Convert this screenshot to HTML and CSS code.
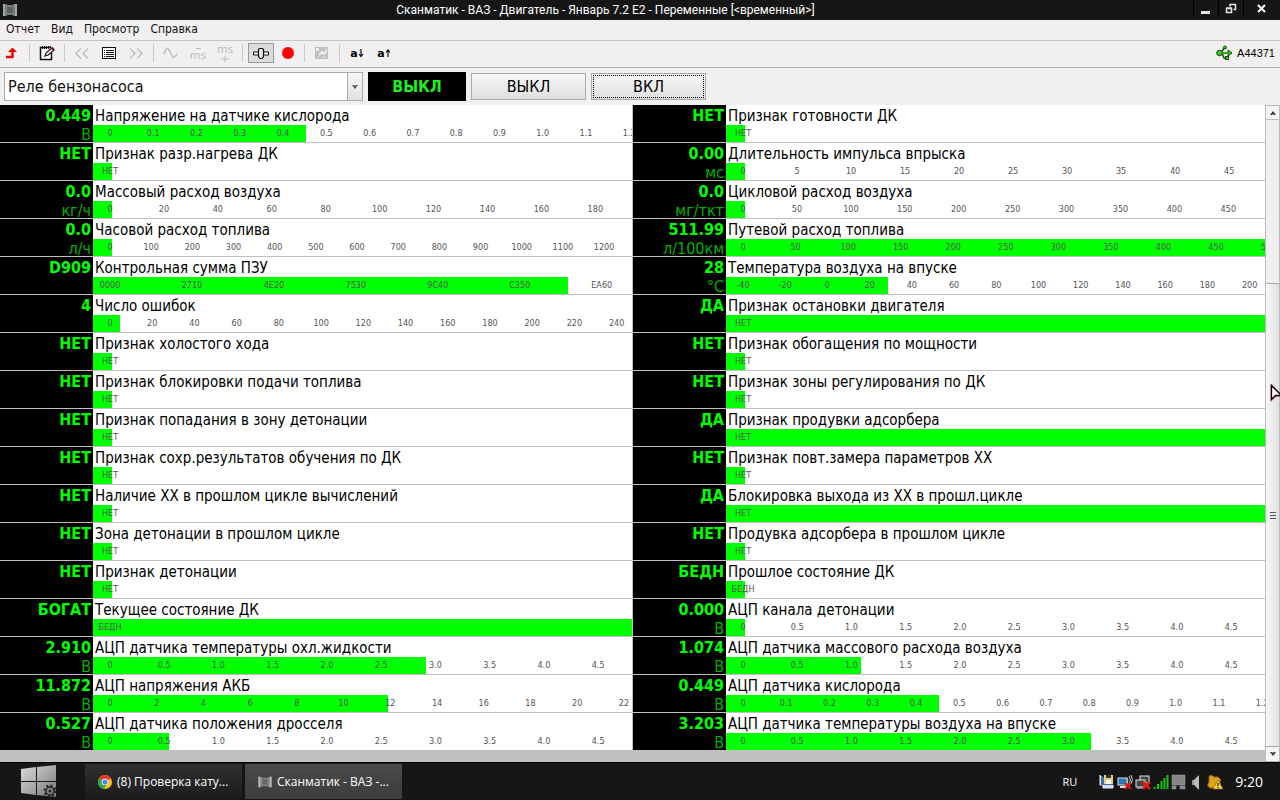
FILE: index.html
```html
<!DOCTYPE html>
<html lang="ru">
<head>
    <meta charset="UTF-8">
    <meta name="viewport" content="width=device-width, initial-scale=1.0">
    <title>Сканматик - ВАЗ - Двигатель - Январь 7.2 E2</title>
    <link rel="stylesheet" href="styles.css">
</head>
<body>
    <!-- Title bar -->
    <header class="titlebar">
        <svg class="app-icon" width="16" height="14" viewBox="0 0 16 14">
            <path d="M1 1h4v1h6v-1h4v12h-4v-1h-6v1h-4z" fill="#777c78"/>
            <path d="M2 1v12M14 1v12" stroke="#a5a5a5" stroke-width="2"/>
            <rect x="5" y="4" width="6" height="6" fill="#5d635f"/>
        </svg>
        <h1>Сканматик - ВАЗ - Двигатель - Январь 7.2 E2 - Переменные [&lt;временный&gt;]</h1>
        <div class="window-buttons">
            <button type="button" aria-label="Свернуть">
                <svg width="12" height="12" viewBox="0 0 12 12"><path d="M1 8h9v3h-9z" fill="#e6e6e6"/></svg>
            </button>
            <button type="button" aria-label="Восстановить">
                <svg width="12" height="12" viewBox="0 0 12 12"><path d="M5 3.500v-2h5.500v5h-2M1.500 5.500h5v4h-5zM1 5h6" fill="none" stroke="#e6e6e6" stroke-width="1.500"/></svg>
            </button>
            <button type="button" aria-label="Закрыть">
                <svg width="12" height="12" viewBox="0 0 12 12"><path d="M2 2l7 7M9 2l-7 7" stroke="#f0f0f0" stroke-width="2.200"/></svg>
            </button>
        </div>
    </header>

    <!-- Menu -->
    <nav class="menu">
        <a href="#">Отчет</a>
        <a href="#">Вид</a>
        <a href="#">Просмотр</a>
        <a href="#">Справка</a>
    </nav>

    <!-- Toolbar -->
    <div class="toolbar">
        <button type="button" class="tool" aria-label="Выход">
            <svg width="16" height="16" viewBox="0 0 16 16"><path d="M2 12h6.500v-7" fill="none" stroke="#e80000" stroke-width="2.400"/><path d="M4 7l4-4h1l4 4z" fill="#e80000"/></svg>
        </button>
        <span class="separator"></span>
        <button type="button" class="tool" aria-label="Заметки">
            <svg width="16" height="16" viewBox="0 0 16 16"><path d="M12 2.500h-10.500v12h11v-7" fill="#fff" stroke="#111" stroke-width="1.500"/><path d="M3.500 1v3M5.500 1v3M7.500 1v3M9.500 1v3M11.500 1v2" stroke="#111"/><path d="M6 11l1-3 6-5 2 2-6 5z" fill="#fff" stroke="#111" stroke-width="1.200"/><path d="M12.500 2.500l2.500 2.500" stroke="#801010" stroke-width="2"/></svg>
        </button>
        <span class="separator"></span>
        <button type="button" class="tool" aria-label="Назад" disabled>
            <svg width="16" height="16" viewBox="0 0 16 16"><path d="M7 3.500l-5 5 5 5M14 3.500l-5 5 5 5" fill="none" stroke="#c0c0c0" stroke-width="1.500"/></svg>
        </button>
        <button type="button" class="tool" aria-label="Список">
            <svg width="16" height="16" viewBox="0 0 16 16" shape-rendering="crispEdges"><path d="M1.500 2.500h13v11h-13z" fill="#fff" stroke="#111"/><path d="M3 5.500h1M3 7.500h1M3 9.500h1M3 11.500h1M5 5.500h8M5 7.500h8M5 9.500h8M5 11.500h8" stroke="#111"/></svg>
        </button>
        <button type="button" class="tool" aria-label="Вперед" disabled>
            <svg width="16" height="16" viewBox="0 0 16 16"><path d="M2 3.500l5 5-5 5M9 3.500l5 5-5 5" fill="none" stroke="#c0c0c0" stroke-width="1.500"/></svg>
        </button>
        <span class="separator"></span>
        <button type="button" class="tool" aria-label="График" disabled>
            <svg width="16" height="16" viewBox="0 0 16 16"><path d="M1 9c2-7 4-7 6-2s4 8 7 1.500" fill="none" stroke="#c0c0c0" stroke-width="1.600"/></svg>
        </button>
        <button type="button" class="tool time-scale" disabled>
            <svg width="8" height="4" viewBox="0 0 8 4"><path d="M2 2.500h5" stroke="#bdbdbd"/></svg>
            <span>ms</span>
        </button>
        <button type="button" class="tool time-scale" disabled>
            <span>ms</span>
            <svg width="8" height="8" viewBox="0 0 8 8"><path d="M.500 4h7M4 .500v7" stroke="#bdbdbd"/></svg>
        </button>
        <span class="separator"></span>
        <button type="button" class="tool pressed" aria-label="Управление">
            <svg width="18" height="14" viewBox="0 0 18 14"><path d="M1.500 6h5v3h-5zM11.500 6h5v3h-5z" fill="#fff" stroke="#111"/><path d="M6.500 3.500l1-1h3l1 1v7l-1.500 2h-2l-1.500-2z" fill="#e8e8e8" stroke="#111" stroke-width="1.200"/></svg>
        </button>
        <button type="button" class="tool record" aria-label="Запись">
            <svg width="16" height="16" viewBox="0 0 16 16"><circle cx="8" cy="8" r="6" fill="#f00"/></svg>
        </button>
        <span class="separator"></span>
        <button type="button" class="tool" aria-label="Сохранить" disabled>
            <svg width="16" height="16" viewBox="0 0 16 16"><path d="M1 2h13v12h-13z" fill="#c0c0c0"/><path d="M2 3h3v3h-3zM5 8l3-2 2 1 3-4v4l-3 3-2-1-3 2z" fill="#eee"/><path d="M3 12h2M8 12h4" stroke="#e4e4e4"/></svg>
        </button>
        <span class="separator"></span>
        <button type="button" class="tool font">a<svg width="6" height="10" viewBox="0 0 6 10"><path d="M3 1v7M1 6l2 2.500 2-2.500" fill="none" stroke="#111" stroke-width="1.200"/></svg></button>
        <button type="button" class="tool font">a<svg width="6" height="10" viewBox="0 0 6 10"><path d="M3 9v-7M1 4.500l2-2.500 2 2.500" fill="none" stroke="#111" stroke-width="1.200"/></svg></button>
        <div class="device">
            <svg width="17" height="16" viewBox="0 0 17 16">
                <path d="M4 8h10M5 8l3-5h2M6 8l2 5h3" fill="none" stroke="#174d10" stroke-width="1.500"/>
                <path d="M12 5l4 3-4 3z" fill="#38c820" stroke="#174d10"/>
                <circle cx="3.500" cy="8" r="2.800" fill="#38c820" stroke="#174d10"/>
                <circle cx="9" cy="2.500" r="1.500" fill="#38c820" stroke="#174d10"/>
                <rect x="9.500" y="11.500" width="3" height="3" fill="#38c820" stroke="#174d10"/>
                <path d="M5 8h9" stroke="#38c820"/>
            </svg>
            <span>A44371</span>
        </div>
    </div>

    <!-- Actuator control -->
    <div class="control">
        <div class="combo">
            <select aria-label="Исполнительный механизм">
                <option>Реле бензонасоса</option>
            </select>
            <span class="combo-arrow"><svg width="6" height="4" viewBox="0 0 6 4"><path d="M0 0h2l1 1 1-1h2l-3 4z" fill="#555"/></svg></span>
        </div>
        <output class="state">ВЫКЛ</output>
        <button type="button" class="switch">ВЫКЛ</button>
        <button type="button" class="switch focused">ВКЛ</button>
    </div>

    <!-- Variables -->
    <main class="content">
        <div class="variables">
            <div class="column" id="left"></div>
            <div class="column" id="right"></div>
        </div>
        <div class="scrollbar">
            <button type="button" aria-label="Вверх"><svg width="6" height="4" viewBox="0 0 6 4"><path d="M0 4h2l1-1 1 1h2l-3-4z" fill="#333"/></svg></button>
            <div class="track">
                <div class="thumb"><i></i><i></i><i></i></div>
            </div>
            <button type="button" aria-label="Вниз"><svg width="6" height="4" viewBox="0 0 6 4"><path d="M0 0h2l1 1 1-1h2l-3 4z" fill="#333"/></svg></button>
            <svg class="cursor" width="12" height="18" viewBox="0 0 12 18"><path d="M1.500 1.500v14l4-4h5z" fill="#fff" stroke="#e06090" stroke-width="3" opacity=".6"/><path d="M1.500 1.500v14l4-4h6z" fill="#fff" stroke="#000" stroke-width="1.300"/></svg>
        </div>
    </main>

    <!-- Taskbar -->
    <footer class="taskbar">
        <button type="button" class="start" aria-label="Пуск">
            <svg width="38" height="34" viewBox="0 0 38 34">
                <defs><linearGradient id="metal" x1="0" y1="0" x2="1" y2="1"><stop offset="0" stop-color="#dcdcdc"/><stop offset="1" stop-color="#777"/></linearGradient></defs>
                <path d="M1 4l15-2v14h-15zM17 2l19-2v16h-19zM1 17h15v13l-15-2zM17 17h19v15l-19-2z" fill="url(#metal)"/>
                <circle cx="30" cy="26" r="4" fill="none" stroke="#222" stroke-width="1.500"/>
                <circle cx="30" cy="26" r="5.500" fill="none" stroke="#222" stroke-width="2" stroke-dasharray="2 2.300"/>
                <circle cx="30" cy="26" r="1.500" fill="#222"/>
            </svg>
        </button>
        <button type="button" class="task">
            <svg width="14" height="14" viewBox="0 0 14 14">
                <circle cx="7" cy="7" r="7" fill="#fbc116"/>
                <path d="M7 7L.9 3.500a7 7 0 0 1 12.200 0z" fill="#e33b2e"/>
                <path d="M7 7l-6.100-3.500a7 7 0 0 0 5.100 10.400l3-5z" fill="#2da94f"/>
                <circle cx="7" cy="7" r="3.300" fill="#fff"/>
                <circle cx="7" cy="7" r="2.600" fill="#4688f1"/>
            </svg>
            <span>(8) Проверка кату...</span>
        </button>
        <button type="button" class="task active">
            <svg width="14" height="12" viewBox="0 0 16 14">
                <path d="M0 1h4v1h8v-1h4v12h-4v-1h-8v1h-4z" fill="#858585"/>
                <path d="M1.500 1v12M14.500 1v12" stroke="#b8b8b8" stroke-width="2"/>
                <rect x="5" y="4" width="6" height="6" fill="#666"/>
            </svg>
            <span>Сканматик - ВАЗ -...</span>
        </button>
        <div class="tray">
            <span class="language">RU</span>
            <div class="tray-icons">
                <svg width="16" height="16" viewBox="0 0 16 16"><path d="M1 1v10h3v3h10v-3" fill="#d8dce8" stroke="#eee"/><rect x="2" y="3" width="11" height="8" fill="#3a6fb0"/><rect x="5" y="1" width="9" height="9" fill="#e8cf8a"/><rect x="7" y="1" width="5" height="3" fill="#333"/><rect x="7" y="6" width="5" height="4" fill="#fff"/></svg>
                <svg width="16" height="16" viewBox="0 0 16 16"><rect x="1" y="4" width="9" height="7" fill="#2878b8" stroke="#ddd"/><path d="M3 13h6" stroke="#ddd" stroke-width="2"/><path d="M10 4q2 2 0 5M12 2q3 4 0 8M14 1q3 5 0 9" fill="none" stroke="#ccc"/><path d="M8 9l6 6M14 9l-6 6" stroke="#e01818" stroke-width="2"/></svg>
                <svg width="16" height="16" viewBox="0 0 16 16"><rect x="5" y="2" width="9" height="7" fill="#444" stroke="#ddd"/><rect x="1" y="6" width="9" height="7" fill="#444" stroke="#ddd"/><path d="M2 14h6" stroke="#ddd"/><path d="M8 8l7 7M15 8l-7 7" stroke="#e01818" stroke-width="2.500"/></svg>
                <svg width="16" height="16" viewBox="0 0 16 16"><path d="M1.500 13v2M5 10v5M8.500 7v8M11.500 4v11M14.500 1v14" stroke="#18c018" stroke-width="2"/></svg>
                <svg width="16" height="16" viewBox="0 0 16 16"><path d="M1 1h13v10h-13zM1 12h4v3h-4zM9 12h5v3h-5z" fill="#858585" stroke="#aaa" stroke-width=".5"/></svg>
                <svg width="16" height="16" viewBox="0 0 16 16"><path d="M3 6h2v5h-2z" fill="#999"/><path d="M5 6l5-5v15l-5-5z" fill="#b8bcc0"/></svg>
                <svg width="16" height="16" viewBox="0 0 16 16"><path d="M2 2q3-2 5 1l4 0q4 2 2 5v6h-10q-4-2-1-6z" fill="#e0a020" stroke="#8a5a08"/><path d="M11 6l5 9h-10z" fill="#ffd94a" stroke="#8a5a08" stroke-width=".7"/><path d="M11 9v3M11 13v1" stroke="#222" stroke-width="1.300"/></svg>
            </div>
            <time>9:20</time>
        </div>
    </footer>
    <script src="script.js"></script>
</body>
</html>
```
FILE: styles.css
```css
* {
    box-sizing: border-box;
}
body {
    margin: 0;
    height: 100vh;
    display: flex;
    flex-direction: column;
    overflow: hidden;
    background: #f1efef;
    color: #000;
    font-family: "Open Sans", "Noto Sans", sans-serif;
    font-size: 12px;
}
button {
    margin: 0;
    padding: 0;
    border: none;
    background: none;
    color: inherit;
    font: inherit;
}
svg {
    flex: none;
}

/* Title bar */
.titlebar {
    display: flex;
    align-items: center;
    height: 20px;
    padding-left: 2px;
    background: #161616;
    color: #fff;
}
.titlebar h1 {
    flex: 1;
    margin: 0;
    font-family: Roboto, sans-serif;
    font-size: 12px;
    font-weight: normal;
    line-height: 20px;
    text-align: center;
}
.window-buttons {
    display: flex;
    align-self: flex-start;
}
.window-buttons button {
    display: flex;
    align-items: center;
    justify-content: center;
    width: 25px;
    height: 17px;
    border-left: 1px solid #000;
}
.window-buttons button:last-child {
    width: 37px;
}

/* Menu */
.menu {
    display: flex;
    gap: 11px;
    height: 21px;
    padding-left: 6px;
    border-bottom: 1px solid #c4c4c4;
}
.menu a {
    color: #111;
    font-family: "DejaVu Sans Condensed", "DejaVu Sans", sans-serif;
    font-size: 12px;
    line-height: 19px;
    text-decoration: none;
}

/* Toolbar */
.toolbar {
    display: flex;
    align-items: center;
    gap: 3px;
    height: 27px;
    padding: 0 5px 2px 0;
    border-bottom: 1px solid #aaa;
}
.tool {
    display: flex;
    align-items: center;
    justify-content: center;
    width: 24px;
    height: 20px;
    font-family: "DejaVu Sans", sans-serif;
}
.tool.pressed {
    width: 26px;
    border: 1px solid #999;
    background: #dcdcdc;
}
.tool.record {
    width: 22px;
}
.tool.font {
    font-size: 11px;
    font-weight: bold;
}
.time-scale {
    flex-direction: column;
    color: #bdbdbd;
    font-size: 11px;
}
.time-scale span {
    line-height: 11px;
}
.separator {
    width: 1px;
    height: 18px;
    margin: 0 2px;
    background: #c8c8c8;
}
.device {
    display: flex;
    align-items: center;
    gap: 4px;
    margin-left: auto;
    font-family: "Liberation Sans", Arial, sans-serif;
    font-size: 11px;
}

/* Actuator control */
.control {
    display: flex;
    align-items: center;
    gap: 5px;
    height: 37px;
    padding-left: 4px;
    font-family: "DejaVu Sans Condensed", "DejaVu Sans", sans-serif;
    font-size: 16px;
}
.combo {
    display: flex;
    width: 359px;
    height: 29px;
    border: 1px solid #aaa;
    background: #fff;
}
.combo select {
    flex: 1;
    padding: 0 3px;
    border: none;
    background: none;
    appearance: none;
    color: #111;
    font: inherit;
}
.combo-arrow {
    display: flex;
    align-items: center;
    justify-content: center;
    width: 15px;
    border-left: 1px solid #aaa;
    background: linear-gradient(#f8f8f8, #e0e0e0);
}
.state {
    width: 98px;
    height: 29px;
    background: #000;
    color: #1fef1f;
    font-weight: bold;
    line-height: 29px;
    text-align: center;
}
.switch {
    width: 115px;
    height: 27px;
    border: 1px solid #aaa;
    background: linear-gradient(#f8f8f8, #dedede);
    line-height: 24px;
}
.switch.focused {
    outline: 1px dotted #000;
    outline-offset: -3px;
}

/* Variables */
.content {
    display: flex;
    flex: 1;
    min-height: 0;
    background: #c0c0c0;
}
.variables {
    display: flex;
    flex: 1;
    gap: 1px;
    align-items: flex-start;
    min-width: 0;
}
.column {
    flex: 1;
    min-width: 0;
    font-family: "DejaVu Sans Condensed", "DejaVu Sans", sans-serif;
}
.row {
    display: flex;
    height: 38px;
    border-bottom: 1px solid #c0c0c0;
    background: #fff;
}
.reading {
    width: 93px;
    padding-right: 2px;
    background: #000;
    color: #0f0;
    font-size: 16px;
    text-align: right;
    white-space: nowrap;
}
.reading b, .reading span {
    display: block;
}
.reading b {
    line-height: 21px;
}
.reading span {
    color: #00b000;
    line-height: 17px;
}
.gauge {
    display: grid;
    grid-template-rows: 20px 17px;
    flex: 1;
    min-width: 0;
}
.gauge h2 {
    margin: 0;
    padding-left: 2px;
    font-size: 15px;
    font-weight: normal;
    line-height: 22px;
    white-space: nowrap;
}
.bar {
    display: grid;
    min-width: 0;
    overflow: hidden;
}
.fill, .scale {
    grid-area: 1 / 1;
}
.fill {
    background: #0f0;
}
.scale {
    display: flex;
    margin: 0;
    padding: 0 0 0 17px;
    color: #555;
    font-size: 9px;
    line-height: 16px;
    list-style: none;
}
/* zero-width items keep every label centred on its mark */
.scale li {
    display: flex;
    justify-content: center;
    width: 0;
    white-space: nowrap;
}

/* Scrollbar */
.scrollbar {
    position: relative;
    display: flex;
    flex-direction: column;
    width: 15px;
    border: 1px solid #bbb;
    background: #f1efef;
}
.scrollbar button {
    display: flex;
    align-items: center;
    justify-content: center;
    height: 14px;
    background: #f4f4f4;
}
.scrollbar button:first-child {
    border-bottom: 1px solid #bbb;
}
.track {
    display: flex;
    flex: 1;
    flex-direction: column;
    justify-content: flex-end;
}
.thumb {
    display: flex;
    flex-direction: column;
    align-items: center;
    justify-content: center;
    gap: 2px;
    height: 74%;
    border-top: 1px solid #aaa;
    border-bottom: 1px solid #aaa;
    background: linear-gradient(to right, #f8f8f8, #e0e0e0);
}
.thumb i {
    width: 6px;
    height: 1px;
    background: #555;
}
.cursor {
    position: absolute;
    top: 278px;
    left: 4px;
}

/* Taskbar */
.taskbar {
    display: flex;
    height: 38px;
    border-top: 1px solid #000;
    background: #161616;
    color: #fff;
}
.start {
    display: flex;
    align-items: center;
    justify-content: center;
    width: 77px;
}
.task {
    display: flex;
    align-items: center;
    gap: 5px;
    width: 157px;
    height: 35px;
    margin: 1px 3px 0 0;
    padding-left: 13px;
    background: linear-gradient(#303030, #1c1c1c);
    white-space: nowrap;
}
.start + .task {
    margin-left: 8px;
}
.task.active {
    background: linear-gradient(#4a4a4a, #3c3c3c);
}
.tray {
    display: flex;
    align-items: center;
    margin-left: auto;
    padding-right: 17px;
}
.language {
    font-size: 11px;
}
.tray-icons {
    display: flex;
    gap: 2px;
    margin: 0 12px 0 22px;
}
.tray time {
    font-size: 14px;
}
```
FILE: script.js
```js
// name, value, unit, fill %, first mark, mark step, mark count, gap between marks %, decimals
const left = [
    ['Напряжение на датчике кислорода', '0.449', 'В', 39.5, 0, 0.1, 13, 8.29, 1],
    ['Признак разр.нагрева ДК', 'НЕТ'],
    ['Массовый расход воздуха', '0.0', 'кг/ч', 3.5, 0, 20, 10, 10.33, 0],
    ['Часовой расход топлива', '0.0', 'л/ч', 3.5, 0, 100, 13, 7.89, 0],
    ['Контрольная сумма ПЗУ', 'D909', '', 88.1, 0, 10000, 7, 15.7, 'hex'],
    ['Число ошибок', '4', '', 5, 0, 20, 13, 8.09, 0],
    ['Признак холостого хода', 'НЕТ'],
    ['Признак блокировки подачи топлива', 'НЕТ'],
    ['Признак попадания в зону детонации', 'НЕТ'],
    ['Признак сохр.результатов обучения по ДК', 'НЕТ'],
    ['Наличие ХХ в прошлом цикле вычислений', 'НЕТ'],
    ['Зона детонации в прошлом цикле', 'НЕТ'],
    ['Признак детонации', 'НЕТ'],
    ['Текущее состояние ДК', 'БОГАТ'],
    ['АЦП датчика температуры охл.жидкости', '2.910', 'В', 61.8, 0, 0.5, 10, 10.39, 1],
    ['АЦП напряжения АКБ', '11.872', 'В', 54.7, 0, 2, 12, 8.95, 0],
    ['АЦП датчика положения дросселя', '0.527', 'В', 14.1, 0, 0.5, 10, 10.39, 1]
];

const right = [
    ['Признак готовности ДК', 'НЕТ'],
    ['Длительность импульса впрыска', '0.00', 'мс', 3.5, 0, 5, 10, 10.35, 0],
    ['Цикловой расход воздуха', '0.0', 'мг/ткт', 3.5, 0, 50, 10, 10.33, 0],
    ['Путевой расход топлива', '511.99', 'л/100км', 100, 0, 50, 11, 10.07, 0],
    ['Температура воздуха на впуске', '28', '°C', 30.1, -40, 20, 13, 8.09, 0],
    ['Признак остановки двигателя', 'ДА'],
    ['Признак обогащения по мощности', 'НЕТ'],
    ['Признак зоны регулирования по ДК', 'НЕТ'],
    ['Признак продувки адсорбера', 'ДА'],
    ['Признак повт.замера параметров ХХ', 'НЕТ'],
    ['Блокировка выхода из ХХ в прошл.цикле', 'ДА'],
    ['Продувка адсорбера в прошлом цикле', 'НЕТ'],
    ['Прошлое состояние ДК', 'БЕДН'],
    ['АЦП канала детонации', '0.000', 'В', 3.5, 0, 0.5, 10, 10.39, 1],
    ['АЦП датчика массового расхода воздуха', '1.074', 'В', 25, 0, 0.5, 10, 10.39, 1],
    ['АЦП датчика кислорода', '0.449', 'В', 39.5, 0, 0.1, 13, 8.29, 1],
    ['АЦП датчика температуры воздуха на впуске', '3.203', 'В', 67.7, 0, 0.5, 10, 10.39, 1]
];

function markText(value, format) {
    if (format === 'hex') {
        return value.toString(16).toUpperCase().padStart(4, '0');
    }
    return value === 0 ? '0' : value.toFixed(format);
}

function getMarks(value, start, step, count, format) {
    // flags have a single mark with the name of their "off" state
    if (step === undefined) {
        return [value === 'БОГАТ' || value === 'БЕДН' ? 'БЕДН' : 'НЕТ'];
    }
    const marks = [];
    for (let i = 0; i < count; i++) {
        marks.push(markText(start + i * step, format));
    }
    return marks;
}

function render(id, rows) {
    document.getElementById(id).innerHTML = rows.map(row => {
        const [name, value, unit = '', fill, start, step, count, gap = 0, format] = row;
        const isOn = value === 'ДА' || value === 'БОГАТ';
        const width = fill === undefined ? (isOn ? 100 : 3.5) : fill;
        const marks = getMarks(value, start, step, count, format);
        return `
            <div class="row">
                <div class="reading"><b>${value}</b><span>${unit}</span></div>
                <div class="gauge">
                    <h2>${name}</h2>
                    <div class="bar">
                        <div class="fill" style="width: ${width}%"></div>
                        <ul class="scale" style="column-gap: ${gap}%">
                            ${marks.map(mark => `<li>${mark}</li>`).join('')}
                        </ul>
                    </div>
                </div>
            </div>`;
    }).join('');
}

render('left', left);
render('right', right);
```
